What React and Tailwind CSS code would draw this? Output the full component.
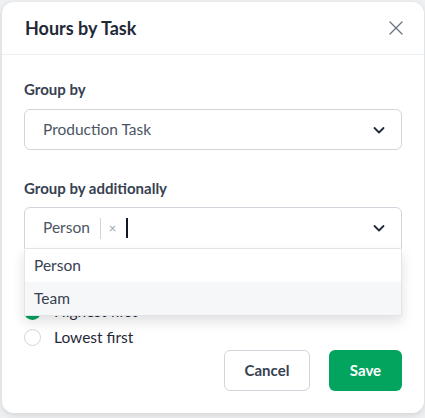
import React from "react";

function Chevron() {
	return (
		<svg width="14" height="14" viewBox="0 0 14 14" fill="none" stroke="#1f2937" strokeWidth="1.8" strokeLinecap="round" strokeLinejoin="round">
			<path d="M2.5 5 L7 9.5 L11.5 5" />
		</svg>
	);
}

export default function App() {
	return (
		<div className="w-[425px] h-[418px] bg-[#eef0f2] p-[2px] pr-[1px] overflow-hidden font-['Lato',sans-serif]">
			<div className="bg-white rounded-xl h-[411px] shadow-[0_2px_6px_rgba(0,0,0,0.12)] flex flex-col">
				{/* Header */}
				<div className="flex items-center justify-between px-[23px] h-[53px] border-b border-[#eceef1]">
					<h2 className="text-[18px] font-bold text-[#1f2937]">Hours by Task</h2>
					<svg width="14" height="14" viewBox="0 0 14 14" stroke="#6b7280" strokeWidth="1.3" strokeLinecap="round" className="mr-[-2px]">
						<path d="M1 1 L13 13 M13 1 L1 13" />
					</svg>
				</div>

				{/* Body */}
				<div className="px-[22px] pt-[24px] flex flex-col">
					<label className="text-[15px] font-bold text-[#374151] leading-5">Group by</label>
					<div className="mt-[10px] h-[41px] border border-[#d1d5db] rounded-md flex items-center justify-between pl-[18px] pr-[15px]">
						<span className="text-[15.5px] text-[#4b5563]">Production Task</span>
						<Chevron />
					</div>

					<label className="mt-[28px] text-[15px] font-bold text-[#374151] leading-5">Group by additionally</label>
					<div className="relative mt-[9px]">
						<div className="h-[42px] border border-[#d1d5db] rounded-t-md flex items-center justify-between pl-[18px] pr-[15px]">
							<div className="flex items-center">
								<span className="text-[15.5px] text-[#4b5563]">Person</span>
								<span className="ml-[10px] w-px h-[21px] bg-[#d1d5db]" />
								<span className="ml-[8px] text-[13px] text-[#9ca3af] leading-none">×</span>
								<span className="ml-[10px] w-[2px] h-[20px] bg-[#111827]" />
							</div>
							<Chevron />
						</div>
						{/* Dropdown menu */}
						<div className="absolute left-0 right-0 top-[41px] z-10 bg-white border border-[#e2e4e8] shadow-[0_6px_12px_rgba(0,0,0,0.12)]">
							<div className="h-[33px] flex items-center pl-[9px] text-[15.5px] text-[#374151]">Person</div>
							<div className="h-[33px] flex items-center pl-[9px] text-[15.5px] text-[#374151] bg-[#f6f7f9]">Team</div>
						</div>
					</div>

					{/* sort radios (partly under the open menu) */}
					<div className="mt-[51px] flex flex-col gap-[3px]">
						<div className="flex items-center gap-[13px]">
							<span className="w-[17px] h-[17px] rounded-full bg-[#03a45e] flex items-center justify-center">
								<span className="w-[6px] h-[6px] rounded-full bg-white" />
							</span>
							<span className="text-[15.5px] text-[#1f2937]">Highest first</span>
						</div>
						<div className="flex items-center gap-[13px]">
							<span className="w-[17px] h-[17px] rounded-full border border-[#d1d5db] bg-white" />
							<span className="text-[15.5px] text-[#1f2937]">Lowest first</span>
						</div>
					</div>
				</div>

				{/* Footer */}
				<div className="flex justify-end gap-[19px] px-[22px]">
					<button className="h-[41px] w-[86px] border border-[#d1d5db] rounded-md text-[15px] font-bold text-[#374151] bg-white">Cancel</button>
					<button className="h-[41px] w-[73px] rounded-md text-[15px] font-bold text-white bg-[#03a45e]">Save</button>
				</div>
			</div>
		</div>
	);
}
